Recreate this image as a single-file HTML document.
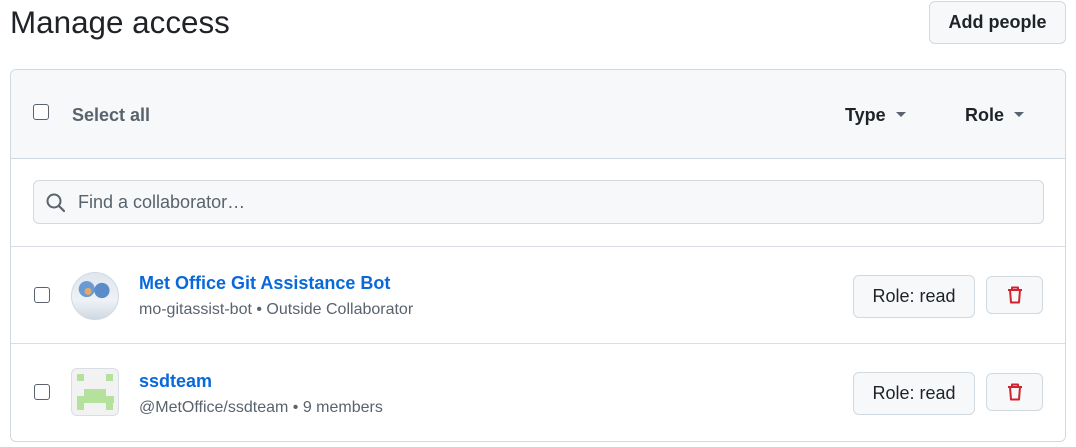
<!DOCTYPE html>
<html><head><style>
*{box-sizing:border-box;margin:0;padding:0}
body{width:1076px;height:447px;background:#fff;font-family:"Liberation Sans",sans-serif;color:#1f2328;position:relative;overflow:hidden}
.abs{position:absolute}
h1{position:absolute;left:10px;top:3px;font-size:31.4px;font-weight:400;line-height:40px}
.btn{position:absolute;background:#f6f8fa;border:1px solid #d1d9e0;border-radius:6px;font-weight:700;font-size:18px;display:flex;align-items:center;justify-content:center;color:#1f2328}
.box{position:absolute;left:10px;top:69px;width:1056px;height:373px;border:1px solid #d1d9e0;border-radius:6px;overflow:hidden}
.hdr{position:absolute;left:0;top:0;width:100%;height:89px;background:#f6f8fa;border-bottom:1px solid #d1d9e0}
.cb{position:absolute;width:16px;height:16px;border:1.5px solid #59636e;border-radius:3px;background:#fff}
.t{position:absolute;white-space:nowrap}
.sep{position:absolute;left:0;width:100%;height:1px;background:#d8dee4}
.caret{display:inline-block;width:0;height:0;border-left:5px solid transparent;border-right:5px solid transparent;border-top:5px solid #59636e;vertical-align:middle;margin-left:10px;margin-top:-3px}
.id{position:absolute;background:#b4e19b;width:7.3px;height:7.3px}
</style></head><body>
<h1>Manage access</h1>
<div class="btn" style="left:929px;top:1px;width:137px;height:43px">Add people</div>
<div class="box">
 <div class="hdr">
  <div class="cb" style="left:22px;top:34px"></div>
  <div class="t" style="left:61px;top:35px;font-size:18px;font-weight:700;color:#59636e">Select all</div>
  <div class="t" style="left:834px;top:35px;font-size:18px;font-weight:700">Type<span class="caret"></span></div>
  <div class="t" style="left:954px;top:35px;font-size:18px;font-weight:700">Role<span class="caret"></span></div>
 </div>
 <div class="abs" style="left:22px;top:110px;width:1011px;height:44px;background:#f6f8fa;border:1px solid #d1d9e0;border-radius:6px">
  <svg class="abs" style="left:11px;top:11px" width="22" height="22" viewBox="0 0 22 22"><circle cx="9" cy="9" r="6.5" fill="none" stroke="#59636e" stroke-width="2"/><path d="M14 14l5 5" stroke="#59636e" stroke-width="2.2" stroke-linecap="round"/></svg>
  <div class="t" style="left:44px;top:11px;font-size:18px;color:#59636e">Find a collaborator…</div>
 </div>
 <div class="sep" style="top:176px"></div>
 <div class="cb" style="left:23px;top:217px"></div>
 <div class="abs" style="left:60px;top:202px;width:48px;height:48px;border-radius:50%;border:1px solid #d1d9e0;background:radial-gradient(circle at 35% 40%,#e8a860 0 8%,transparent 9%),radial-gradient(circle at 65% 38%,#5a8cc8 0 18%,transparent 19%),radial-gradient(circle at 32% 35%,#6a9ad4 0 18%,transparent 19%),linear-gradient(#dfe6ee,#eef2f6 60%,#cfd8e2)"></div>
 <div class="t" style="left:128px;top:203px;font-size:18px;font-weight:700;color:#0969da">Met Office Git Assistance Bot</div>
 <div class="t" style="left:128px;top:231px;font-size:16px;color:#59636e">mo-gitassist-bot • Outside Collaborator</div>
 <div class="btn" style="left:842px;top:205px;width:122px;height:43px;font-weight:400;font-size:18px">Role: read</div>
 <div class="btn" style="left:975px;top:206px;width:57px;height:38px"><svg width="18" height="20" viewBox="0 0 18 20"><path d="M2 5h14M6 5V2.5h6V5M4 5l1 12.5h8L14 5" fill="none" stroke="#d1242f" stroke-width="2" stroke-linejoin="round"/></svg></div>
 <div class="sep" style="top:273px"></div>
 <div class="cb" style="left:23px;top:314px"></div>
 <div class="abs" style="left:60px;top:298px;width:48px;height:48px;border-radius:6px;border:1px solid #d8dee4;background:#f2f2f2">
  <div class="id" style="left:5px;top:5px"></div><div class="id" style="left:34px;top:5px"></div>
  <div class="id" style="left:12px;top:19.6px;width:22px"></div>
  <div class="id" style="left:5px;top:26.9px;width:36.5px"></div>
  <div class="id" style="left:5px;top:34px"></div><div class="id" style="left:34px;top:34px"></div>
 </div>
 <div class="t" style="left:128px;top:301px;font-size:18px;font-weight:700;color:#0969da">ssdteam</div>
 <div class="t" style="left:128px;top:329px;font-size:16px;color:#59636e">@MetOffice/ssdteam • 9 members</div>
 <div class="btn" style="left:842px;top:302px;width:122px;height:43px;font-weight:400;font-size:18px">Role: read</div>
 <div class="btn" style="left:975px;top:303px;width:57px;height:38px"><svg width="18" height="20" viewBox="0 0 18 20"><path d="M2 5h14M6 5V2.5h6V5M4 5l1 12.5h8L14 5" fill="none" stroke="#d1242f" stroke-width="2" stroke-linejoin="round"/></svg></div>
</div>
</body></html>
